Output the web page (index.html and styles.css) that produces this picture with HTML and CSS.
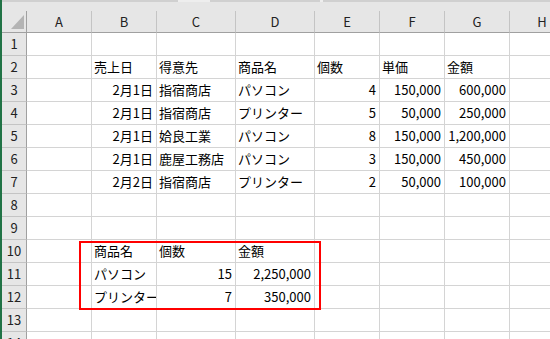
FILE: index.html
```html
<!DOCTYPE html>
<html lang="ja">
<head>
<meta charset="utf-8">
<link rel="stylesheet" href="styles.css">
</head>
<body>
<div class="sheet">
  <div class="topbar">
    <div class="seg s1"></div><div class="seg gap g1"></div><div class="seg s2"></div><div class="seg gap g2"></div><div class="seg s3"></div>
  </div>
  <div class="grid">
    <div class="corner"><svg width="13" height="14" viewBox="0 0 13 14"><polygon points="13,0 13,14 0,14" fill="#b4b4b4"/></svg></div>
    <div class="ch">A</div><div class="ch">B</div><div class="ch">C</div><div class="ch">D</div><div class="ch">E</div><div class="ch">F</div><div class="ch">G</div><div class="ch">H</div>

    <div class="rh">1</div><div class="c"></div><div class="c"></div><div class="c"></div><div class="c"></div><div class="c"></div><div class="c"></div><div class="c"></div><div class="c"></div>

    <div class="rh">2</div><div class="c"></div><div class="c">売上日</div><div class="c">得意先</div><div class="c">商品名</div><div class="c">個数</div><div class="c">単価</div><div class="c">金額</div><div class="c"></div>

    <div class="rh">3</div><div class="c"></div><div class="c r">2月1日</div><div class="c">指宿商店</div><div class="c">パソコン</div><div class="c r">4</div><div class="c r">150,000</div><div class="c r">600,000</div><div class="c"></div>

    <div class="rh">4</div><div class="c"></div><div class="c r">2月1日</div><div class="c">指宿商店</div><div class="c">プリンター</div><div class="c r">5</div><div class="c r">50,000</div><div class="c r">250,000</div><div class="c"></div>

    <div class="rh">5</div><div class="c"></div><div class="c r">2月1日</div><div class="c">姶良工業</div><div class="c">パソコン</div><div class="c r">8</div><div class="c r">150,000</div><div class="c r">1,200,000</div><div class="c"></div>

    <div class="rh">6</div><div class="c"></div><div class="c r">2月1日</div><div class="c">鹿屋工務店</div><div class="c">パソコン</div><div class="c r">3</div><div class="c r">150,000</div><div class="c r">450,000</div><div class="c"></div>

    <div class="rh">7</div><div class="c"></div><div class="c r">2月2日</div><div class="c">指宿商店</div><div class="c">プリンター</div><div class="c r">2</div><div class="c r">50,000</div><div class="c r">100,000</div><div class="c"></div>

    <div class="rh">8</div><div class="c"></div><div class="c"></div><div class="c"></div><div class="c"></div><div class="c"></div><div class="c"></div><div class="c"></div><div class="c"></div>

    <div class="rh">9</div><div class="c"></div><div class="c"></div><div class="c"></div><div class="c"></div><div class="c"></div><div class="c"></div><div class="c"></div><div class="c"></div>

    <div class="rh">10</div><div class="c"></div><div class="c">商品名</div><div class="c">個数</div><div class="c">金額</div><div class="c"></div><div class="c"></div><div class="c"></div><div class="c"></div>

    <div class="rh">11</div><div class="c"></div><div class="c">パソコン</div><div class="c r">15</div><div class="c r">2,250,000</div><div class="c"></div><div class="c"></div><div class="c"></div><div class="c"></div>

    <div class="rh">12</div><div class="c"></div><div class="c">プリンター</div><div class="c r">7</div><div class="c r">350,000</div><div class="c"></div><div class="c"></div><div class="c"></div><div class="c"></div>

    <div class="rh">13</div><div class="c"></div><div class="c"></div><div class="c"></div><div class="c"></div><div class="c"></div><div class="c"></div><div class="c"></div><div class="c"></div>

    <div class="rh">14</div><div class="c"></div><div class="c"></div><div class="c"></div><div class="c"></div><div class="c"></div><div class="c"></div><div class="c"></div><div class="c"></div>
  </div>
  <div class="highlight"></div>
</div>
</body>
</html>
```
FILE: styles.css
```css
html, body {
  margin: 0;
  padding: 0;
}
body {
  width: 550px;
  height: 339px;
  overflow: hidden;
  background: #ffffff;
  font-family: "Noto Sans CJK JP", "Noto Sans", sans-serif;
  color: #000;
}
.sheet {
  position: relative;
  border-left: 2px solid #217346;
  height: 339px;
  overflow: hidden;
}
.topbar {
  display: flex;
  height: 11px;
  background: #e6e6e6;
}
.seg {
  height: 2px;
  background: #d0d0d0;
}
.seg.gap { background: #eeeeee; }
.s1 { width: 176px; }
.g1 { width: 32px; }
.s2 { width: 110px; }
.g2 { width: 3px; }
.s3 { flex: 1; }

.grid {
  display: grid;
  grid-template-columns: 25px 65px 65px 79px 79px 65px 65px 65px 65px;
  grid-template-rows: 22px repeat(14, 23px);
  font-size: 13px;
}
.grid > div {
  box-sizing: border-box;
  white-space: nowrap;
  overflow: hidden;
}
.corner {
  background: #e6e6e6;
  border-right: 1px solid #a0a0a0;
  border-bottom: 1px solid #a0a0a0;
  display: flex;
  justify-content: flex-end;
  align-items: flex-end;
  padding: 0 2px 3px 0;
}
.corner svg { display: block; }
.ch {
  background: #e6e6e6;
  border-right: 1px solid #c4c4c4;
  border-bottom: 1px solid #a0a0a0;
  text-align: center;
  line-height: 21px;
  color: #222;
}
.rh {
  background: #e6e6e6;
  border-right: 1px solid #a0a0a0;
  border-bottom: 1px solid #c4c4c4;
  text-align: center;
  line-height: 22px;
  color: #222;
}
.c {
  border-right: 1px solid #d4d4d4;
  border-bottom: 1px solid #d4d4d4;
  line-height: 22px;
  padding: 0 3px 0 2px;
}
.c.r { text-align: right; }

.highlight {
  position: absolute;
  left: 77px;
  top: 241px;
  width: 242px;
  height: 69px;
  box-sizing: border-box;
  border: 2px solid #ff0000;
}
```
